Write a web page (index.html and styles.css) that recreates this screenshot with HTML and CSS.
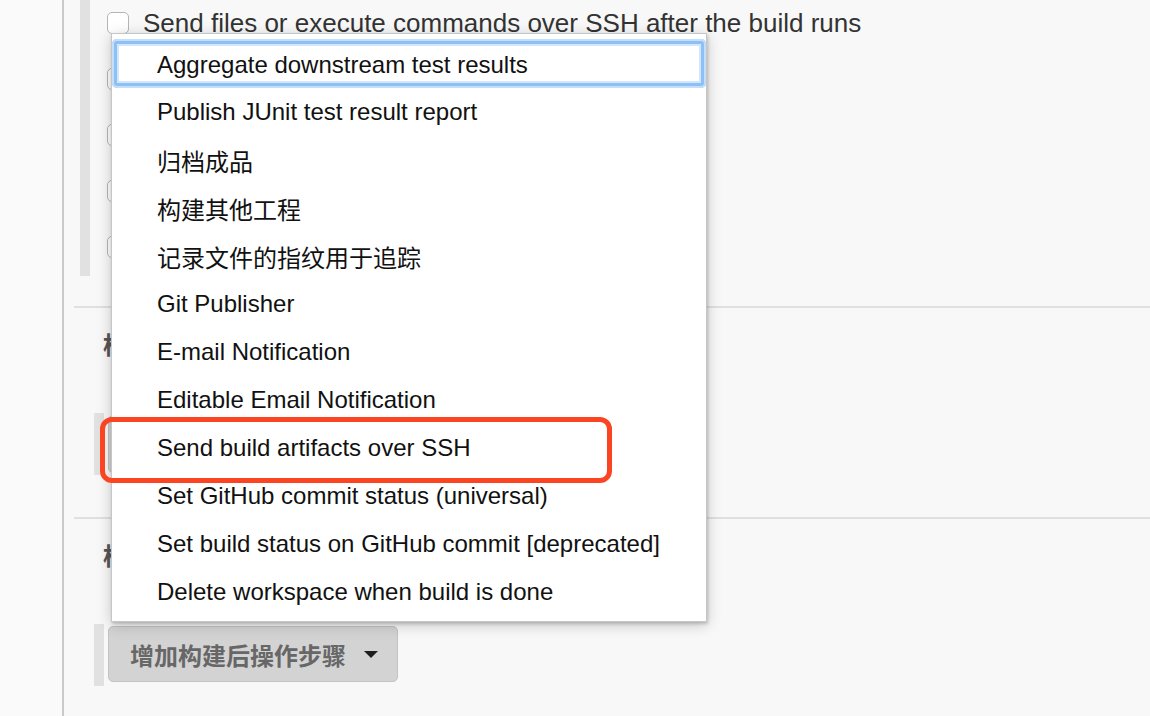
FILE: index.html
```html
<!DOCTYPE html>
<html lang="zh-CN">
<head>
<meta charset="utf-8">
<title>Post-build Actions</title>
<link rel="stylesheet" href="styles.css">
</head>
<body>
<div class="page">
  <div class="side"></div>
  <div class="main">
    <section class="sec sec-first">
      <div class="bar bar-tall"></div>
      <div class="rows">
        <div class="row"><span class="cb"></span><span class="label">Send files or execute commands over SSH after the build runs</span></div>
        <div class="row"><span class="cb"></span></div>
        <div class="row"><span class="cb"></span></div>
        <div class="row"><span class="cb"></span></div>
        <div class="row"><span class="cb"></span></div>
      </div>
    </section>
    <section class="sec">
      <h2 class="heading">构建</h2>
      <div class="btnrow">
        <div class="bar bar-short"></div>
        <div class="btn-hidden"></div>
      </div>
    </section>
    <section class="sec sec-last">
      <h2 class="heading">构建后操作</h2>
      <div class="btnrow">
        <div class="bar bar-short"></div>
        <button class="addbtn">增加构建后操作步骤<span class="caret"></span></button>
      </div>
    </section>
  </div>
</div>

<ul class="menu">
  <li class="item focused">Aggregate downstream test results</li>
  <li class="item">Publish JUnit test result report</li>
  <li class="item">归档成品</li>
  <li class="item">构建其他工程</li>
  <li class="item">记录文件的指纹用于追踪</li>
  <li class="item">Git Publisher</li>
  <li class="item">E-mail Notification</li>
  <li class="item">Editable Email Notification</li>
  <li class="item">Send build artifacts over SSH</li>
  <li class="item">Set GitHub commit status (universal)</li>
  <li class="item">Set build status on GitHub commit [deprecated]</li>
  <li class="item">Delete workspace when build is done</li>
</ul>
<div class="annot"></div>
</body>
</html>
```

FILE: styles.css
```css
html, body {
  margin: 0;
  padding: 0;
}
body {
  width: 1150px;
  height: 716px;
  overflow: hidden;
  background: #f8f8f8;
  font-family: "Liberation Sans", "Noto Sans CJK SC", sans-serif;
  position: relative;
}
.page {
  display: flex;
  height: 716px;
}
.side {
  width: 62px;
  flex: none;
  background: #fafafa;
  border-right: 2px solid #c9c9c9;
}
.main {
  flex: 1;
  padding-left: 10px;
}
.sec {
  border-bottom: 2px solid #e0e0e0;
  padding-top: 26px;
  padding-bottom: 42px;
}
.sec-first {
  display: flex;
  align-items: flex-start;
  padding-top: 0;
  padding-bottom: 14px;
}
.sec-last {
  border-bottom: none;
}
.bar {
  width: 10px;
  background: #e1e1e1;
  flex: none;
}
.bar-tall {
  height: 276px;
  margin-left: 6px;
}
.rows {
  padding-top: 12px;
  padding-left: 17px;
}
.row {
  height: 56px;
  display: flex;
  align-items: flex-start;
}
.cb {
  width: 20px;
  height: 20px;
  border: 1px solid #b5b5b5;
  border-radius: 5px;
  background: #fff;
  flex: none;
}
.label {
  margin-left: 14px;
  font-size: 26px;
  line-height: 22px;
  color: #333;
}
.heading {
  margin: 0 0 55px 29px;
  font-size: 24px;
  line-height: 24px;
  font-weight: bold;
  color: #555;
}
.btnrow {
  display: flex;
  align-items: flex-start;
  margin-left: 20px;
}
.bar-short {
  height: 62px;
}
.btn-hidden {
  margin: 2px 0 0 4px;
  width: 240px;
  height: 56px;
  background: #d3d3d3;
  border: 1px solid #c3c3c3;
  border-radius: 5px;
}
.addbtn {
  margin: 2px 0 0 4px;
  height: 56px;
  padding: 0 19px 0 21px;
  display: flex;
  align-items: center;
  background: #d3d3d3;
  border: 1px solid #c3c3c3;
  border-radius: 5px;
  font-family: "Noto Sans CJK SC", sans-serif;
  font-size: 24px;
  font-weight: bold;
  color: #676767;
}
.caret {
  width: 0;
  height: 0;
  margin-left: 18px;
  border-left: 7px solid transparent;
  border-right: 7px solid transparent;
  border-top: 7px solid #1e1e1e;
}
.menu {
  position: absolute;
  left: 111px;
  top: 33px;
  width: 594px;
  margin: 0;
  padding: 6px 0 5px;
  list-style: none;
  background: #fff;
  border: 1px solid #c6c6c6;
  box-shadow: 1px 2px 3px rgba(0,0,0,0.18), 0 3px 14px rgba(0,0,0,0.2);
}
.item {
  height: 48px;
  display: flex;
  align-items: center;
  padding-left: 45px;
  box-sizing: border-box;
  font-size: 24px;
  color: #111;
  white-space: nowrap;
}
.focused {
  border-radius: 5px;
  margin-top: -1px;
  height: 49px;
  padding-top: 2px;
  box-shadow: inset 0 0 0 2px #c4dffa, inset 0 0 0 5px #8cc0f6, inset 0 0 0 7px #d3e7fc;
}
.annot {
  position: absolute;
  left: 100px;
  top: 417px;
  width: 502px;
  height: 56px;
  border: 5px solid #fb4421;
  border-radius: 12px;
}
```
